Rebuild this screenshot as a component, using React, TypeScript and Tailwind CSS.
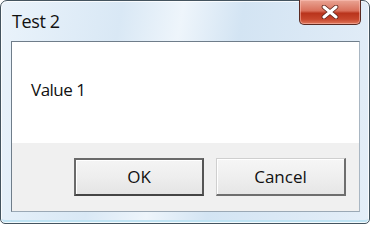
import React from "react";

export default function App() {
  return (
    <div className="w-[371px] h-[225px] bg-white">
      <div
        className="w-[370px] h-[224px] flex flex-col rounded-t-[7px] rounded-b-[5px] border border-[#44545f] bg-[linear-gradient(100deg,#eaf3fb_0%,#d9e8f5_30%,#eef5fb_45%,#d3e4f3_60%,#e4eef8_100%)] shadow-[inset_0_0_0_1px_rgba(255,255,255,0.8),inset_0_-3px_0_#bfe3f3]"
        style={{ fontFamily: '"Open Sans", "Noto Sans", sans-serif' }}
      >
        <div className="h-[40px] flex items-start justify-between pl-[11px] pr-[8px]">
          <div className="pt-[8px] text-[18px] leading-[24px] text-[#111] tracking-[-0.4px]">Test 2</div>
          <div className="w-[62px] h-[25px] -mt-px rounded-b-[5px] border border-[#5a2a22] border-t-0 bg-[linear-gradient(180deg,#eaa595_0%,#d9705b_45%,#b9341c_55%,#c7462c_80%,#e0785c_100%)] shadow-[inset_0_0_0_1px_rgba(255,200,190,0.5)] flex items-center justify-center">
            <svg width="20" height="14" viewBox="0 0 20 14">
              <path d="M4 2 L16 12 M16 2 L4 12" stroke="#5a2218" strokeWidth="4.6" strokeLinecap="round" />
              <path d="M4 2 L16 12 M16 2 L4 12" stroke="#ffffff" strokeWidth="3" strokeLinecap="round" />
            </svg>
          </div>
        </div>
        <div className="flex-1 ml-[10px] mr-[9px] mb-[11px] flex flex-col border border-[#6f7d8a] border-r-[#a9b6c2] border-b-[#9aa8b5] bg-white">
          <div className="flex-1 flex items-start pl-[19px] pt-[37px]">
            <span className="text-[17px] leading-[22px] text-[#111] tracking-[-0.5px]">Value 1</span>
          </div>
          <div className="h-[68px] bg-[#f0f0f0] flex items-start justify-end gap-[12px] pr-[13px] pt-[15px]">
            <button className="w-[130px] h-[38px] border-2 border-[#6a6a6a] border-b-[#444] border-r-[#555] bg-[linear-gradient(180deg,#f4f4f4_0%,#eeeeee_50%,#e4e4e4_100%)] shadow-[inset_1px_1px_0_#ffffff] text-[17px] text-[#111] flex items-center justify-center">
              OK
            </button>
            <button className="w-[130px] h-[38px] border border-[#cfcfcf] border-b-2 border-r-2 border-b-[#6e6e6e] border-r-[#6e6e6e] bg-[linear-gradient(180deg,#f6f6f6_0%,#efefef_50%,#e6e6e6_100%)] shadow-[inset_1px_1px_0_#ffffff] text-[17px] text-[#111] flex items-center justify-center">
              Cancel
            </button>
          </div>
        </div>
      </div>
    </div>
  );
}
